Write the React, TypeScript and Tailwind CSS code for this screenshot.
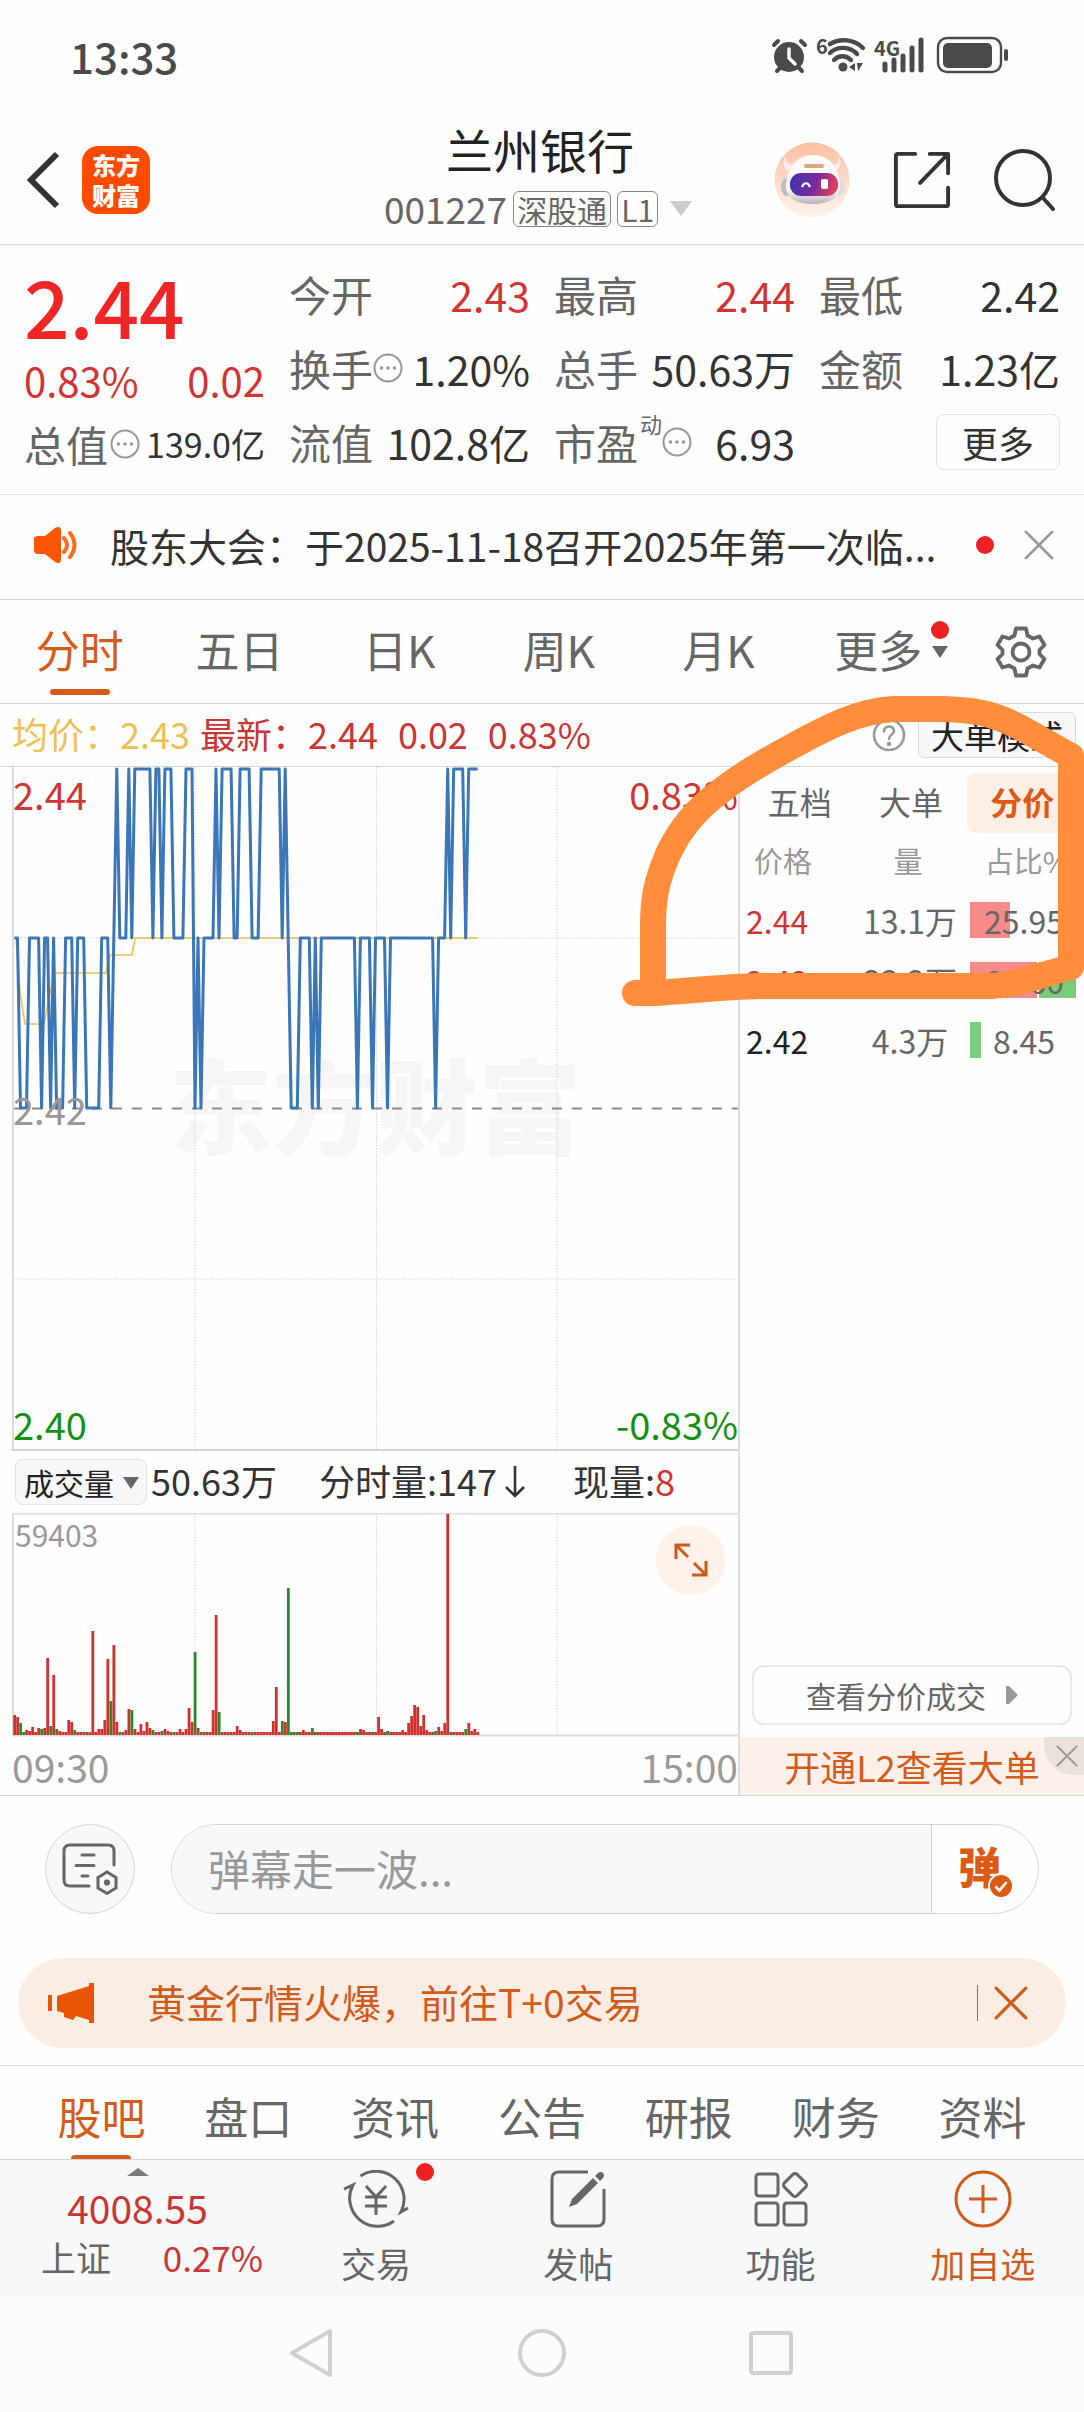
import type { ReactNode } from "react"

const quotes: { label: string; value: string; color: string; info?: boolean; sup?: string }[][] = [
  [
    { label: "今开", value: "2.43", color: "text-[#d03535]" },
    { label: "换手", value: "1.20%", color: "text-[#333333]", info: true },
    { label: "流值", value: "102.8亿", color: "text-[#333333]" },
  ],
  [
    { label: "最高", value: "2.44", color: "text-[#d03535]" },
    { label: "总手", value: "50.63万", color: "text-[#333333]" },
    { label: "市盈", value: "6.93", color: "text-[#333333]", info: true, sup: "动" },
  ],
  [
    { label: "最低", value: "2.42", color: "text-[#333333]" },
    { label: "金额", value: "1.23亿", color: "text-[#333333]" },
  ],
]

const chartTabs = ["分时", "五日", "日K", "周K", "月K"]
const infoTabs = ["股吧", "盘口", "资讯", "公告", "研报", "财务", "资料"]

const priceRows = [
  { price: "2.44", volume: "13.1万", percent: "25.95", buy: 40, sell: 0, color: "text-[#d03535]" },
  { price: "2.43", volume: "33.2万", percent: "65.60", buy: 67, sell: 37, color: "text-[#d03535]" },
  { price: "2.42", volume: "4.3万", percent: "8.45", buy: 0, sell: 11, color: "text-[#222222]" },
]

// price level per run of minutes: T = 2.44, M = 2.43, L = 2.42
const runs =
  "M2 L3 M4 L1 M2 L1 M1 L3 M3 L1 M3 L5 M3 L1 M1 T1 M3 T1 M1 T6 M1 T2 M1 T3 M4 T3 L1 M1 L1 M4 T1 M1 T4 M2 T4 M3 T7 M1 T1 M1 L3 M4 L1 M1 L1 M12 L1 M4 L1 M4 L1 M15 L1 M3 T1 M1 T4 M1 T4"
const levels: Record<string, number> = { T: 2, M: 171, L: 341 }

const pricePoints = runs
  .split(" ")
  .flatMap((run) => Array<number>(Number(run.slice(1))).fill(levels[run[0]]))
  .map((y, i) => `${(2.5 + i * 3.008).toFixed(1)},${y}`)
  .join(" ")

// minute: bar height, negative when the bar is green
const volumes: Record<number, number> = {
  0: 20, 1: 18, 2: -12, 3: -3, 4: 5, 5: 4, 6: 8, 8: 7, 9: -6, 10: 7, 11: 77, 12: -9, 13: 60, 14: -6, 15: 4,
  18: 15, 19: 13, 20: -5, 24: -3, 26: 104, 28: 6, 29: 6, 30: 15, 31: 76, 32: -34, 33: 90, 34: 13, 35: -3, 37: 5,
  38: 26, 39: -25, 40: 6, 42: 11, 43: 4, 44: 13, 45: 7, 46: -5, 49: -4, 50: 6, 51: 4, 53: -3, 55: 6, 57: 6, 58: 27,
  59: 13, 60: -83, 61: 7, 62: -3, 66: 25, 67: 120, 68: -23, 74: 9, 75: 5, 79: -3, 86: 14, 87: 48, 89: -14, 90: 13,
  91: -147, 92: -3, 94: -3, 96: 5, 99: -7, 101: -3, 114: -3, 115: 6, 116: 5, 119: -3, 121: 18, 122: 6, 124: -4,
  129: 5, 131: 12, 132: 19, 133: 30, 134: 28, 135: 9, 136: 20, 137: 5, 140: -4, 141: 8, 142: 4, 143: 12, 144: 221,
  145: -3, 150: -6, 151: 12, 152: 4, 153: 6,
}

function InfoIcon() {
  return (
    <svg viewBox="0 0 30 30" className="w-[30px] h-[30px] shrink-0" fill="none" stroke="#999999" strokeWidth="2">
      <circle cx="15" cy="15" r="13.5" />
      <g fill="#999999" stroke="none">
        <circle cx="8.5" cy="15" r="1.8" />
        <circle cx="15" cy="15" r="1.8" />
        <circle cx="21.5" cy="15" r="1.8" />
      </g>
    </svg>
  )
}

function CrossIcon({ className }: { className: string }) {
  return (
    <svg viewBox="0 0 32 32" className={className} fill="none" stroke="currentColor" strokeWidth="3" strokeLinecap="round">
      <path d="M2 2L30 30M30 2L2 30" />
    </svg>
  )
}

function StatusBar() {
  return (
    <div className="flex items-center justify-between pl-[70px] pr-[74px] py-[26px] text-[#4a4a4a]">
      <span className="text-[42px] leading-[60px] font-medium">13:33</span>
      <svg viewBox="0 -10 240 60" className="w-[240px] h-[60px]" fill="none" stroke="#4a4a4a" strokeLinecap="round">
        <g strokeWidth="4">
          <path d="M4 9L8 5M35 9L31 5M7 35L11 31M32 35L28 31" />
          <circle cx="19" cy="21" r="15" fill="#4a4a4a" stroke="none" />
          <path d="M19 13V22L25 28" stroke="#ffffff" strokeWidth="3.4" />
        </g>
        <g strokeWidth="4.4">
          <path d="M60 8C70 2 84 3 93 12" />
          <path d="M60 17C67 10 80 10 87 18" />
          <path d="M64 24C69 19 76 19 81 24" />
          <circle cx="73" cy="31" r="4.5" fill="#4a4a4a" stroke="none" />
        </g>
        <path d="M85 27V35L79 31ZM87 27H93L88 35Z" fill="#4a4a4a" stroke="none" />
        <text x="46" y="18" fontSize="20" fontWeight="700" fill="#4a4a4a" stroke="none">6</text>
        <text x="104" y="20" fontSize="20" fontWeight="700" fill="#4a4a4a" stroke="none">4G</text>
        <path d="M115 28V34M124 24V34M133 20V34M142 12V34M151 4V34" strokeWidth="5" />
        <rect x="168" y="2" width="63" height="34" rx="9" strokeWidth="2.4" />
        <rect x="173" y="7" width="49" height="25" rx="5" fill="#4a4a4a" stroke="none" />
        <path d="M236 15V23" strokeWidth="4" />
      </svg>
    </div>
  )
}

function Robot() {
  return (
    <svg viewBox="0 0 76 76" className="w-[76px] h-[76px]">
      <defs>
        <linearGradient id="halo" x1="0" y1="0" x2="0" y2="1">
          <stop offset="0" stopColor="#fbc0a2" />
          <stop offset="1" stopColor="#fff3ed" />
        </linearGradient>
        <linearGradient id="visor" x1="0" y1="0" x2="1" y2="0.2">
          <stop offset="0" stopColor="#3a33a8" />
          <stop offset="0.6" stopColor="#7a2aa0" />
          <stop offset="1" stopColor="#d8405a" />
        </linearGradient>
        <linearGradient id="shell" x1="0" y1="0" x2="0" y2="1">
          <stop offset="0" stopColor="#ffffff" />
          <stop offset="0.75" stopColor="#f1eef0" />
          <stop offset="1" stopColor="#b9b4ba" />
        </linearGradient>
      </defs>
      <circle cx="38" cy="38" r="37.5" fill="url(#halo)" />
      <path d="M12 14C11 20 14 22 18 23L14 29C9 25 8 19 12 14ZM64 14C66 20 63 22 59 23L63 28C67 24 68 19 64 14Z" fill="#f3edf0" />
      <ellipse cx="13" cy="45" rx="6" ry="9" fill="#bfbcc2" />
      <ellipse cx="66" cy="45" rx="5" ry="8" fill="#dedadf" />
      <path d="M12 42C14 24 24 13 39 13C54 13 65 24 66 42C67 55 56 62 39 62C22 62 11 56 12 42Z" fill="url(#shell)" />
      <rect x="30" y="22" width="20" height="4" rx="2" fill="#e0a77c" />
      <rect x="16" y="31" width="48" height="23" rx="11" fill="url(#visor)" />
      <path d="M28 45C30 40 34 40 36 45" fill="none" stroke="#ffffff" strokeWidth="2.2" />
      <rect x="47" y="37" width="7" height="10" rx="2" fill="#ffffff" />
    </svg>
  )
}

function Header() {
  return (
    <header className="grid grid-cols-[1fr_auto_1fr] items-center pl-6 pr-7 pt-2 pb-1 border-b border-[#d9d9d9]">
      <div className="flex items-center gap-[22px]">
        <button aria-label="返回">
          <svg viewBox="0 0 36 60" className="w-9 h-[60px]" fill="none" stroke="#333333" strokeWidth="6">
            <path d="M33 4L7 30L33 56" />
          </svg>
        </button>
        <a
          href="#home"
          className="flex flex-col items-center justify-center w-[68px] h-[68px] rounded-2xl bg-[#ff4a00] text-white text-[24px] leading-[30px] font-black"
        >
          <span>东方</span>
          <span>财富</span>
        </a>
      </div>
      <div className="flex flex-col items-center">
        <h1 className="text-[47px] leading-[58px] text-[#222222]">兰州银行</h1>
        <button className="flex items-center gap-1.5 h-[62px] text-[#666666]">
          <span className="text-[37px]">001227</span>
          <span className="px-[3px] border border-[#888888] rounded-md text-[30px] leading-[34px]">深股通</span>
          <span className="px-[3px] border border-[#888888] rounded-md text-[30px] leading-[34px]">L1</span>
          <svg viewBox="0 0 32 16" className="w-8 h-4" fill="#cccccc">
            <path d="M6 0H28L17 15Z" />
          </svg>
        </button>
      </div>
      <div className="flex items-center justify-end gap-[43px]">
        <button aria-label="助手">
          <Robot />
        </button>
        <button aria-label="分享">
          <svg viewBox="0 0 60 60" className="w-[58px] h-[58px]" fill="none" stroke="#333333" strokeWidth="4" strokeLinecap="round" strokeLinejoin="round">
            <path d="M23 3H5Q3 3 3 5V55Q3 57 5 57H55Q57 57 57 55V38M38 3H57V23M56 4L28 33" />
          </svg>
        </button>
        <button aria-label="搜索">
          <svg viewBox="0 0 62 62" className="w-[62px] h-[62px]" fill="none" stroke="#333333" strokeWidth="4" strokeLinecap="round">
            <circle cx="29" cy="29" r="27" />
            <path d="M49 49L59 60" />
          </svg>
        </button>
      </div>
    </header>
  )
}

function QuotePanel() {
  return (
    <section className="grid grid-cols-4 gap-6 px-6 pt-3 pb-[15px] border-b border-[#e6e6e6]">
      <div className="text-[#d03535]">
        <div className="text-[80px] leading-[94px] font-medium text-[#ee2626]">2.44</div>
        <div className="flex justify-between text-[40px] leading-[58px]">
          <span>0.83%</span>
          <span>0.02</span>
        </div>
        <div className="flex items-center leading-[70px]">
          <span className="text-[42px] text-[#666666] mr-0.5">总值</span>
          <InfoIcon />
          <span className="ml-auto text-[34px] text-[#333333]">139.0亿</span>
        </div>
      </div>
      {quotes.map((column, index) => (
        <div key={index} className="text-[42px] leading-[74px] whitespace-nowrap">
          {column.map((item) => (
            <div key={item.label} className="flex items-center h-[74px]">
              <span className="text-[#666666]">{item.label}</span>
              {item.sup && <span className="self-start text-[22px] leading-9 text-[#666666] ml-0.5">{item.sup}</span>}
              {item.info && <InfoIcon />}
              <span className={`ml-auto text-[41px] ${item.color}`}>{item.value}</span>
            </div>
          ))}
          {index === 2 && (
            <div className="flex items-center justify-end h-[74px]">
              <button className="px-[25px] border border-[#e3e3e3] rounded-lg text-[36px] leading-[54px] text-[#333333]">更多</button>
            </div>
          )}
        </div>
      ))}
    </section>
  )
}

function Notice() {
  return (
    <section className="flex items-center pl-8 pr-[30px] pt-5 pb-6 border-b border-[#d9d9d9]">
      <svg viewBox="0 0 46 38" className="w-[46px] h-[38px] shrink-0" fill="#ff5500">
        <path d="M2 13Q2 10 6 10H13L23 2Q29 -1 29 5V33Q29 39 23 36L13 28H6Q2 28 2 24Z" />
        <path d="M32 12Q38 19 32 26M38 7Q47 19 38 31" fill="none" stroke="#ff6a1f" strokeWidth="4" strokeLinecap="round" />
      </svg>
      <a href="#notice" className="ml-8 flex-1 min-w-0 text-[39px] leading-[60px] text-[#333333] truncate">
        股东大会：于2025-11-18召开2025年第一次临...
      </a>
      <span className="w-[18px] h-[18px] rounded-full bg-[#ee2222]" />
      <button aria-label="关闭公告" className="ml-[30px] text-[#999999]">
        <CrossIcon className="w-[30px] h-[30px]" />
      </button>
    </section>
  )
}

function ChartTabs() {
  return (
    <nav className="flex border-b border-[#d9d9d9] text-[44px] text-[#666666]">
      {chartTabs.map((tab, index) => (
        <button key={tab} className={`relative flex-1 pb-1 leading-[99px] ${index === 0 ? "text-[#d35c1a]" : ""}`}>
          {tab}
          {index === 0 && <span className="absolute left-1/2 -ml-[30px] bottom-2 w-[60px] h-1.5 rounded-full bg-[#d35c1a]" />}
        </button>
      ))}
      <button className="relative flex-1 pb-1 leading-[99px]">
        更多
        <span className="absolute right-[9px] top-[21px] w-[18px] h-[18px] rounded-full bg-[#ee2222]" />
        <svg viewBox="0 0 16 12" className="absolute right-2.5 top-[46px] w-4 h-3" fill="#666666">
          <path d="M0 0H16L8 12Z" />
        </svg>
      </button>
      <button aria-label="设置" className="flex items-center justify-center w-[126px]">
        <svg viewBox="0 0 52 52" className="w-[52px] h-[52px]" fill="none" stroke="#666666" strokeWidth="3.8">
          <path d="M21 2.5H31L32.5 9.5L38 12.5L44.5 10.5L49.5 19L44.5 24V28L49.5 33L44.5 41.5L38 39.5L32.5 42.5L31 49.5H21L19.5 42.5L14 39.5L7.5 41.5L2.5 33L7.5 28V24L2.5 19L7.5 10.5L14 12.5L19.5 9.5Z" strokeLinejoin="round" />
          <circle cx="26" cy="26" r="8.5" />
        </svg>
      </button>
    </nav>
  )
}

function ChartLegend() {
  return (
    <div className="flex items-center pl-3 pr-2 border-b border-[#d3d6d9] text-[36px] leading-[58px] text-[#c93636]">
      <span className="pb-1 text-[#edbf55]">均价：2.43</span>
      <span className="pb-1 ml-2.5">最新：2.44</span>
      <span className="pb-1 ml-5">0.02</span>
      <span className="pb-1 ml-5">0.83%</span>
      <button aria-label="帮助" className="ml-auto">
        <svg viewBox="0 0 34 34" className="w-[34px] h-[34px]" fill="none" stroke="#999999" strokeWidth="2.6" strokeLinecap="round">
          <circle cx="17" cy="17" r="15" />
          <path d="M12 13.5C12 7 22 7 22 13C22 17 17 16.5 17 21" />
          <circle cx="17" cy="26" r="1" fill="#999999" />
        </svg>
      </button>
      <button className="ml-3 px-3 border border-[#d9dcdf] rounded-md bg-[#f7f8fa] text-[33px] leading-[44px] text-[#222222]">大单模式</button>
    </div>
  )
}

function PriceChart() {
  return (
    <div className="relative h-[684px] text-[38px] leading-[50px]">
      <svg viewBox="0 0 726 684" preserveAspectRatio="none" className="w-full h-full" fill="none">
        <text x="363" y="380" textAnchor="middle" fontSize="103" fontWeight="900" fill="#f6f6f6">东方财富</text>
        <path d="M183 0V684M364.5 0V684M545 0V684M0 171H726M0 512H726" stroke="#d4d4d4" strokeDasharray="1.5 1.5" />
        <path d="M0 341.5H726" stroke="#8a8a8a" strokeWidth="2" strokeDasharray="10 10" />
        <path d="M1 0V684" stroke="#dddddd" strokeWidth="2" />
        <path d="M0 683H726" stroke="#d3d3d3" strokeWidth="2" />
        <polyline points="2,171 4,171 8,225 13,257 32,257 42,206 94,206 98,188 120,188 123,171 466,171" stroke="#edbf55" strokeWidth="1.6" />
        <polyline points={pricePoints} stroke="#3b76b8" strokeWidth="3" strokeLinejoin="round" />
      </svg>
      <span className="absolute left-px top-0.5 text-[#d03535]">2.44</span>
      <span className="absolute right-0 top-0.5 text-[#d03535]">0.83%</span>
      <span className="absolute left-px top-[317px] text-[#999999]">2.42</span>
      <span className="absolute left-px bottom-0.5 text-[#159015]">2.40</span>
      <span className="absolute right-0 bottom-0.5 text-[#159015]">-0.83%</span>
    </div>
  )
}

function VolumeChart() {
  return (
    <div className="relative h-[224px]">
      <svg viewBox="0 0 726 224" preserveAspectRatio="none" className="w-full h-full" fill="none">
        <path d="M183 0V222M364.5 0V222M545 0V222" stroke="#d4d4d4" strokeDasharray="1.5 1.5" />
        <path d="M0 0.5H726M0 222.5H726M1 0V222" stroke="#dddddd" strokeWidth="2" />
        {Array.from({ length: 155 }, (_, i) => {
          const size = volumes[i] ?? 3
          const height = Math.abs(size)
          return (
            <rect key={i} x={1.2 + i * 3.008} y={222 - height} width="2.8" height={height} fill={size < 0 ? "#2a8a2a" : "#d03030"} />
          )
        })}
      </svg>
      <span className="absolute left-[3px] top-0 text-[30px] leading-[42px] text-[#999999]">59403</span>
      <button aria-label="放大" className="absolute right-3 top-3 flex items-center justify-center w-[70px] h-[70px] rounded-full bg-[#fdf1ea]">
        <svg viewBox="0 0 34 34" className="w-[34px] h-[34px]" fill="none" stroke="#cc5a1c" strokeWidth="3">
          <path d="M2 16V2H16M2 2L14 14M32 18V32H18M32 32L20 20" />
        </svg>
      </button>
    </div>
  )
}

function VolumeLegend() {
  return (
    <div className="flex items-center h-[62px] pl-[3px] text-[36px] text-[#333333] whitespace-nowrap">
      <div className="relative">
        <select
          aria-label="指标"
          className="appearance-none block w-[132px] pl-2 border border-[#e0e2e5] rounded-lg bg-[#f7f8fa] text-[30px] leading-[44px] text-[#222222]"
        >
          <option>成交量</option>
        </select>
        <svg viewBox="0 0 16 12" className="absolute right-2 top-[18px] w-4 h-3 pointer-events-none" fill="#666666">
          <path d="M0 0H16L8 12Z" />
        </svg>
      </div>
      <span className="pb-1 ml-1">50.63万</span>
      <span className="pb-1 ml-[42px]">分时量:147</span>
      <svg viewBox="0 0 20 32" className="ml-2 w-5 h-8" fill="none" stroke="#333333" strokeWidth="2.6">
        <path d="M10 0V30M1 21L10 30L19 21" />
      </svg>
      <span className="pb-1 ml-12">
        现量:<span className="text-[#d03535]">8</span>
      </span>
    </div>
  )
}

function PricePanel() {
  return (
    <aside className="flex flex-col w-[346px] border-l-2 border-[#dddddd]">
      <div className="grid grid-cols-3 pl-1 pr-1.5 pt-1.5 text-[32px] text-[#666666]">
        <button className="pb-1 leading-[56px]">五档</button>
        <button className="pb-1 leading-[56px]">大单</button>
        <button className="pb-1 leading-[56px] rounded-lg bg-[#fdeee6] text-[#dc5a14] font-bold">分价</button>
      </div>
      <table className="w-full table-fixed text-[32px] leading-9 text-[#666666]">
        <thead>
          <tr className="h-[57px] text-[29px] text-[#999999]">
            <th className="w-[110px] pl-3.5 pb-1 text-left font-normal">价格</th>
            <th className="pr-1 pb-1 font-normal">量</th>
            <th className="w-[114px] pb-1 font-normal">占比%</th>
          </tr>
        </thead>
        <tbody>
          {priceRows.map((row) => (
            <tr key={row.price} className="h-[60px]">
              <td className={`pl-1.5 ${row.color}`}>{row.price}</td>
              <td className="text-center">{row.volume}</td>
              <td className="pr-1.5">
                <div className="relative h-9">
                  <div className="absolute inset-0 flex gap-0.5">
                    {row.buy > 0 && <span className="bg-[#f78b8b]" style={{ width: row.buy }} />}
                    {row.sell > 0 && <span className="bg-[#7acb7a]" style={{ width: row.sell }} />}
                  </div>
                  <span className="relative block text-center">{row.percent}</span>
                </div>
              </td>
            </tr>
          ))}
        </tbody>
      </table>
      <button className="flex items-center justify-center gap-5 mt-auto mx-3 mb-3 border-2 border-[#e8e8e8] rounded-xl text-[30px] leading-[56px] text-[#666666]">
        查看分价成交
        <svg viewBox="0 0 12 18" className="w-3 h-[18px]" fill="#999999">
          <path d="M0 0H3L12 9L3 18H0Z" />
        </svg>
      </button>
      <div className="relative bg-[#fcf1ea] text-center">
        <a href="#l2" className="text-[36px] leading-[58px] text-[#d35c1a]">开通L2查看大单</a>
        <button aria-label="关闭" className="absolute right-0 top-0 pl-3 pr-1.5 py-2 rounded-bl-[30px] bg-[#ebe1db] text-[#999999]">
          <CrossIcon className="w-[22px] h-[22px]" />
        </button>
      </div>
    </aside>
  )
}

function Marker() {
  return (
    <svg viewBox="0 0 464 320" className="absolute right-0 -top-2.5 w-[464px] h-80 pointer-events-none" fill="none" stroke="#ff8d3b" strokeWidth="26" strokeLinecap="round" strokeLinejoin="round">
      <path d="M15 299H35C70 297 100 293 140 292H371C400 290 420 281 451 273V62L412 40C378 20 358 16 323 15H275C240 16 205 34 171 53C145 67 122 80 102 96C75 116 60 135 48 160C36 188 33 205 33 232V299" />
    </svg>
  )
}

function Danmaku() {
  return (
    <section className="border-t border-b border-[#d3d6d9] pt-7 pb-[17px]">
      <div className="flex gap-9 px-[45px]">
        <button aria-label="弹幕设置" className="flex items-center justify-center w-[90px] h-[90px] rounded-full border border-[#d3d6d9] bg-[#f7f8fa]">
          <svg viewBox="0 0 56 52" className="w-14 h-[52px]" fill="none" stroke="#666666" strokeWidth="3" strokeLinecap="round">
            <path d="M52 22V8Q52 2 46 2H8Q2 2 2 8V37Q2 43 8 43H27" />
            <path d="M20 12H32M14 22.5H32M20 33H26" />
            <path d="M45 29L54 34.5V45L45 50.5L36 45V34.5Z" />
            <circle cx="45" cy="39.5" r="1.6" fill="#666666" />
          </svg>
        </button>
        <div className="flex flex-1 min-w-0 rounded-full border border-[#d3d6d9] overflow-hidden">
          <input
            aria-label="弹幕"
            placeholder="弹幕走一波..."
            className="flex-1 min-w-0 pl-9 pb-1 bg-[#f7f8fa] text-[42px] placeholder:text-[#999999] outline-none"
          />
          <button aria-label="弹幕开关" className="relative w-[107px] pl-[26px] pb-2 border-l border-[#d3d6d9] text-left text-[43px] leading-[80px] font-black text-[#dd5a14]">
            弹
            <svg viewBox="0 0 26 26" className="absolute left-[56px] top-12 w-[26px] h-[26px]">
              <circle cx="13" cy="13" r="12" fill="#dd5a14" stroke="#ffffff" strokeWidth="2" />
              <path d="M7.5 13.5L11.5 17.5L18.5 9" fill="none" stroke="#ffffff" strokeWidth="2.6" />
            </svg>
          </button>
        </div>
      </div>
      <div className="flex items-center mt-11 mx-[18px] pl-[30px] pr-[38px] h-[90px] rounded-full bg-[#fcede4] text-[#cf5c1d]">
        <svg viewBox="0 0 46 40" className="w-[46px] h-10" fill="#e85604">
          <path d="M0 12H4V28H0ZM9 13L41 3V0H46V40H41V37L28 33L25 37L16 34V30L9 28Z" />
        </svg>
        <a href="#gold" className="ml-[53px] pb-1 text-[39px]">黄金行情火爆，前往T+0交易</a>
        <span className="ml-auto w-px h-9 bg-[#cf5c1d]" />
        <button aria-label="关闭推广" className="ml-4">
          <CrossIcon className="w-[34px] h-[34px]" />
        </button>
      </div>
    </section>
  )
}

function InfoTabs() {
  return (
    <nav className="grid grid-cols-7 px-7 border-b border-[#d3d6d9] text-[44px] text-[#666666]">
      {infoTabs.map((tab, index) => (
        <button key={tab} className={`relative pt-2 leading-[85px] ${index === 0 ? "text-[#d35c1a]" : ""}`}>
          {tab}
          {index === 0 && <span className="absolute left-1/2 -ml-[30px] bottom-0 w-[60px] h-1 rounded-t-full bg-[#d35c1a]" />}
        </button>
      ))}
    </nav>
  )
}

function NavItem({ label, active, dot, children }: { label: string; active?: boolean; dot?: boolean; children: ReactNode }) {
  return (
    <button className={`relative flex flex-1 flex-col items-center pt-2.5 pb-2 ${active ? "text-[#cf5c1d]" : "text-[#666666]"}`}>
      <svg viewBox="0 0 66 58" className="w-[66px] h-[58px]" fill="none" stroke="currentColor" strokeWidth="3">
        {children}
      </svg>
      <span className="mt-2.5 text-[35px] leading-[50px]">{label}</span>
      {dot && <span className="absolute left-1/2 ml-10 top-[3px] w-[18px] h-[18px] rounded-full bg-[#ee2222]" />}
    </button>
  )
}

function BottomNav() {
  return (
    <nav className="flex bg-[#f7f8fa]">
      <a href="#index" className="flex flex-col items-center w-[275px] pt-2 text-[#c93636]">
        <svg viewBox="0 0 22 8" className="w-[22px] h-2" fill="#7a7a80">
          <path d="M0 8L11 0L22 8Z" />
        </svg>
        <span className="mt-1.5 text-[39px] leading-[50px]">4008.55</span>
        <span className="flex items-center justify-between w-full pl-[41px] pr-3 text-[35px] leading-[50px]">
          <span className="text-[#666666]">上证</span>
          <span>0.27%</span>
        </span>
      </a>
      <NavItem label="交易" dot>
        <path d="M17.5 6A28 28 0 0 1 58 42L65 38M51 51A28 28 0 0 1 10 15L1 19" />
        <path d="M23 16L33 27L43 16M22 27H44M22 36H44M33 27V45" />
      </NavItem>
      <NavItem label="发帖">
        <path d="M43 2H14Q7 2 7 9V49Q7 56 14 56H52Q59 56 59 49V19" />
        <path d="M24 37L27 29L48 8L53 13L32 34Z" fill="currentColor" stroke="none" />
        <path d="M50 6L53 3Q56 1 58 3T58 8L55 11Z" fill="currentColor" stroke="none" />
      </NavItem>
      <NavItem label="功能">
        <rect x="8" y="4" width="22" height="22" rx="3" />
        <rect x="8" y="33" width="22" height="22" rx="3" />
        <rect x="36" y="33" width="22" height="22" rx="3" />
        <rect x="38" y="6" width="18" height="18" rx="3" transform="rotate(45 47 15)" />
      </NavItem>
      <NavItem label="加自选" active>
        <circle cx="33" cy="29" r="27" />
        <path d="M33 15V43M19 29H47" />
      </NavItem>
    </nav>
  )
}

function SystemNav() {
  return (
    <div className="flex items-center justify-center gap-[180px] pt-8 pb-[34px] bg-[#fcfcfc]">
      <button aria-label="系统返回">
        <svg viewBox="0 0 50 50" className="w-[50px] h-[50px]" fill="none" stroke="#d0d0d0" strokeWidth="4" strokeLinejoin="round">
          <path d="M5 25L43 3V47Z" />
        </svg>
      </button>
      <button aria-label="主屏幕">
        <svg viewBox="0 0 50 50" className="w-[50px] h-[50px]" fill="none" stroke="#d0d0d0" strokeWidth="4">
          <circle cx="25" cy="25" r="22" />
        </svg>
      </button>
      <button aria-label="最近任务">
        <svg viewBox="0 0 50 50" className="w-[50px] h-[50px]" fill="none" stroke="#d0d0d0" strokeWidth="4">
          <rect x="4" y="5" width="40" height="40" rx="2" />
        </svg>
      </button>
    </div>
  )
}

export default function App() {
  return (
    <main className="min-h-screen bg-[#fefefe] font-['Noto_Sans_CJK_SC',sans-serif]">
      <StatusBar />
      <Header />
      <QuotePanel />
      <Notice />
      <ChartTabs />
      <section className="relative">
        <ChartLegend />
        <div className="flex">
          <div className="flex-1 min-w-0 pl-3">
            <PriceChart />
            <VolumeLegend />
            <VolumeChart />
            <div className="flex justify-between text-[39px] leading-[58px] text-[#999999]">
              <span>09:30</span>
              <span>15:00</span>
            </div>
          </div>
          <PricePanel />
        </div>
        <Marker />
      </section>
      <Danmaku />
      <InfoTabs />
      <BottomNav />
      <SystemNav />
    </main>
  )
}
